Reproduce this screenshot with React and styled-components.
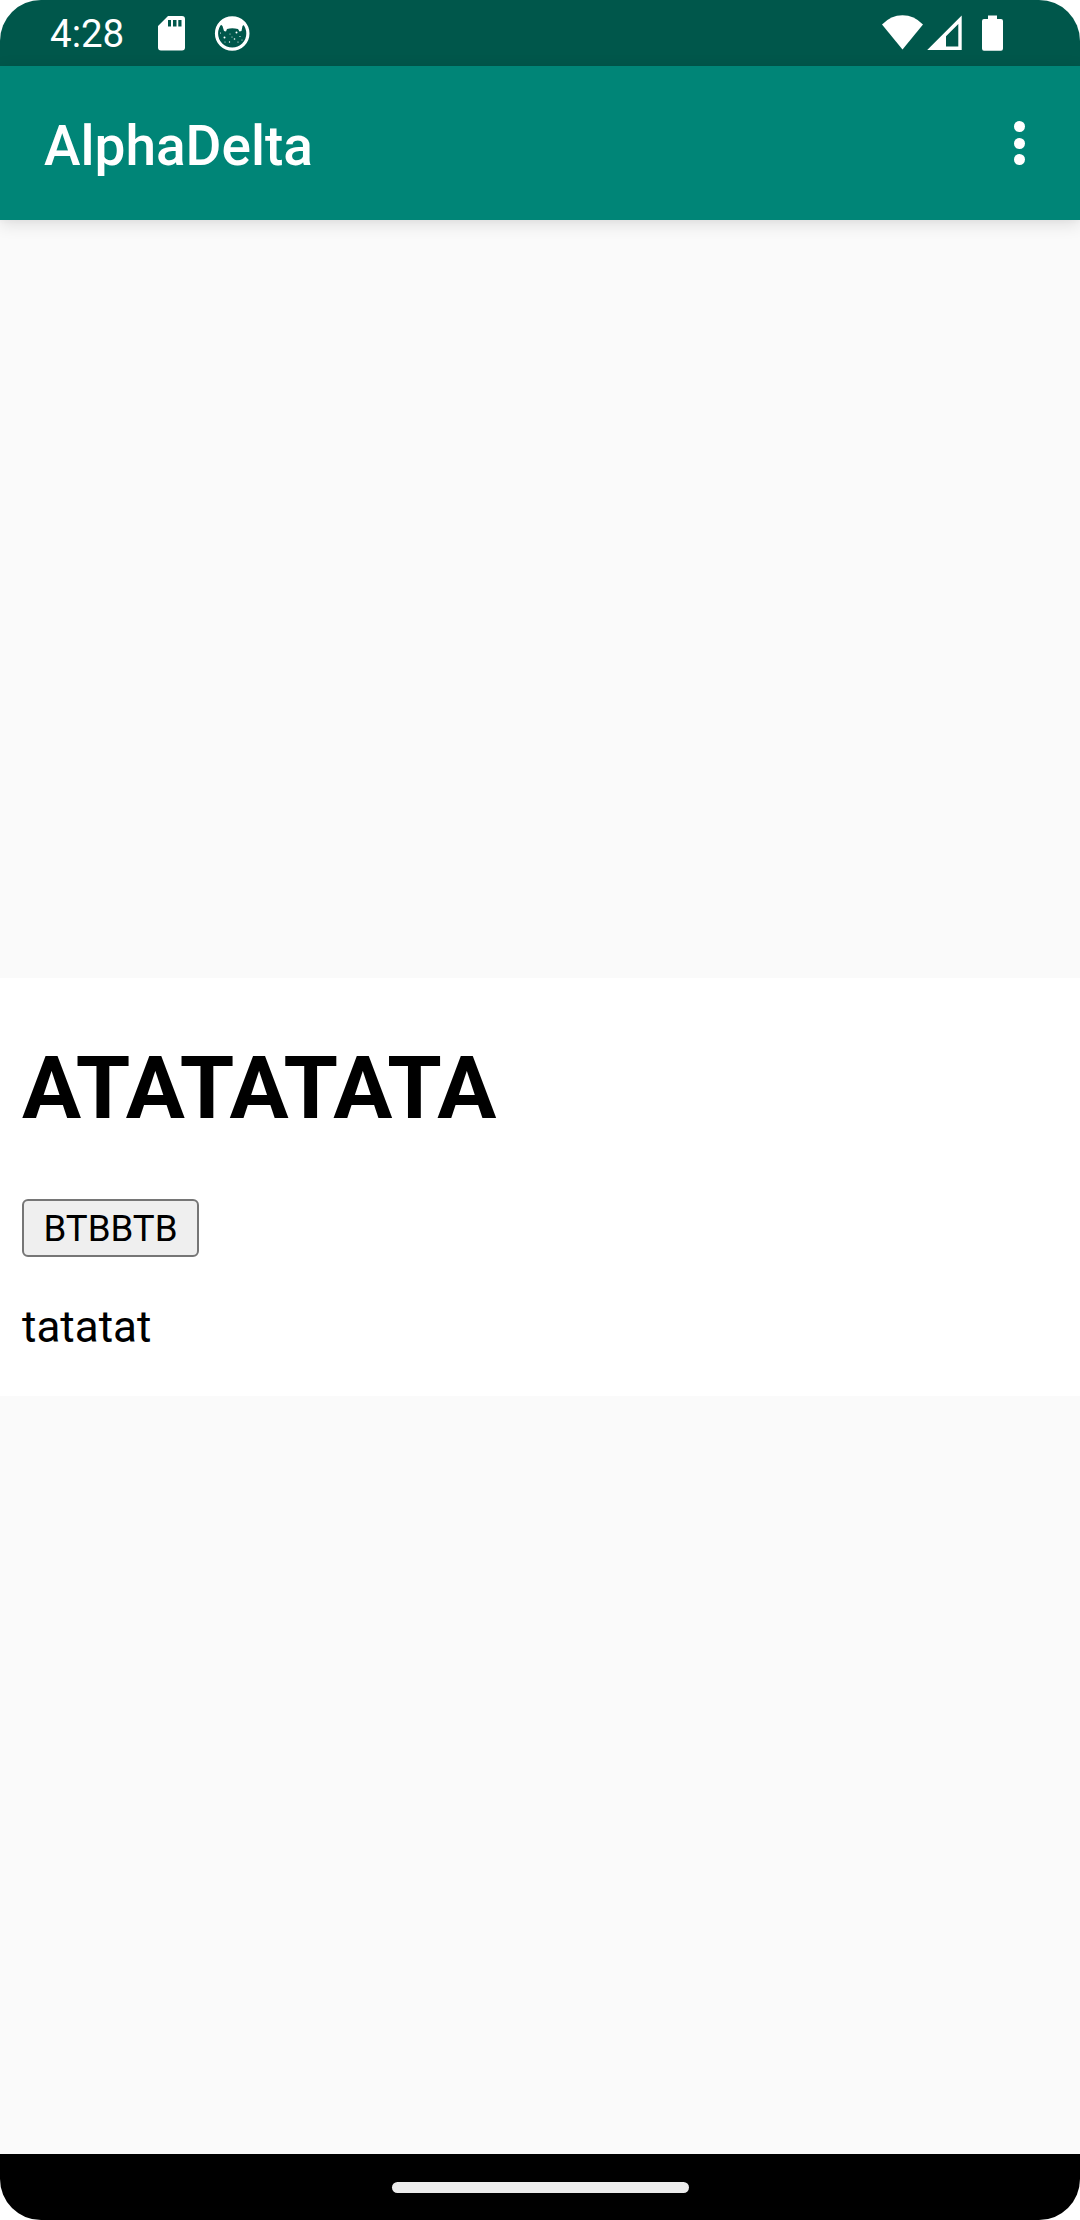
import React from "react";
import styled, { createGlobalStyle } from "styled-components";

const GlobalStyle = createGlobalStyle`
  * { box-sizing: border-box; }
  html, body { margin: 0; padding: 0; background: #fff; }
  body { font-family: Roboto, "Noto Sans", sans-serif; }
`;

const Screen = styled.div`
  display: flex;
  flex-direction: column;
  width: 1080px;
  height: 2220px;
  overflow: hidden;
  border-radius: 41px;
  background: #fafafa;
`;

const StatusBar = styled.header`
  display: flex;
  flex: none;
  align-items: center;
  justify-content: space-between;
  height: 66px;
  padding: 0 77px 0 50px;
  background: #00574b;
  color: #fff;
`;

const StatusGroup = styled.div`
  display: flex;
  align-items: center;
`;

const Clock = styled.span`
  width: 108px;
  font-size: 38.5px;
  line-height: 46px;
  padding-top: 2px;
`;

const Glyph = styled.svg`
  display: block;
  flex: none;
  width: ${(p) => p.$w}px;
  height: 36px;
  margin-left: ${(p) => p.$gap || 0}px;
`;

const AppBar = styled.div`
  display: flex;
  flex: none;
  align-items: center;
  justify-content: space-between;
  height: 154px;
  padding: 0 52px 0 44px;
  background: #008577;
  color: #fff;
  position: relative;
  box-shadow: 0 4px 16px rgba(0, 0, 0, 0.12), 0 2px 4px rgba(0, 0, 0, 0.02);
`;

const Title = styled.h1`
  margin: 0;
  padding-top: 6px;
  font-size: 55px;
  font-weight: 500;
  line-height: 64px;
`;

const MenuButton = styled.button`
  display: flex;
  flex-direction: column;
  align-items: center;
  gap: 5.5px;
  margin: 0 3.5px 0 0;
  padding: 0;
  border: 0;
  background: none;
`;

const Dot = styled.span`
  width: 11px;
  height: 11px;
  border-radius: 50%;
  background: #fff;
`;

const Content = styled.main`
  display: flex;
  flex: 1;
  flex-direction: column;
  justify-content: center;
`;

const WebPage = styled.section`
  display: flex;
  flex-direction: column;
  align-items: flex-start;
  height: 418px;
  padding: 59px 22px 44px;
  background: #fff;
  color: #000;
`;

const Heading = styled.h2`
  margin: 0 0 61px;
  font-size: 88px;
  font-weight: 700;
  line-height: 101px;
`;

const PageButton = styled.button`
  height: 58px;
  width: 177px;
  margin: 0 0 43px;
  padding: 2px 0 0;
  border: 2px solid #767676;
  border-radius: 6px;
  background: #efefef;
  color: #000;
  font-family: inherit;
  font-size: 36.67px;
  line-height: 52px;
`;

const Paragraph = styled.p`
  margin: 0;
  font-size: 44px;
  line-height: 54px;
`;

const NavigationBar = styled.footer`
  display: flex;
  flex: none;
  align-items: center;
  justify-content: center;
  height: 66px;
  background: #000;
`;

const HomeHandle = styled.div`
  width: 297px;
  height: 11px;
  border-radius: 6px;
  background: #ececec;
`;

const SdCardIcon = () => (
  <Glyph $w={27} viewBox="158 15 27 36" fill="#fff">
    <path
      fillRule="evenodd"
      d="M168 16H182Q185 16 185 19V47.500Q185 50.500 182 50.500H161Q158 50.500 158 47.500V26ZM168 20V26.500H171V20ZM173 20V26.500H176.500V20ZM178.300 20V26.500H181.500V20Z"
    />
  </Glyph>
);

const CatIcon = () => (
  <Glyph $w={36} $gap={29} viewBox="214 15 36 36" fill="#fff">
    <circle cx="232.200" cy="33.500" r="15.700" fill="none" stroke="#fff" strokeWidth="3.200" />
    <path d="M219 23Q232 12 246 23L242.500 26L241.500 31L239.500 31.500L238 29Q232 27.500 227 29L226 31.500L224 31L222.500 26Z" />
    <circle cx="224.500" cy="37.500" r="1" />
    <circle cx="236.500" cy="32.500" r="1" />
    <circle cx="230" cy="34" r=".5" />
    <circle cx="234.500" cy="39" r=".8" />
    <circle cx="229.500" cy="42" r=".7" />
    <circle cx="240" cy="36.500" r=".6" />
    <circle cx="220.500" cy="33" r=".6" />
    <circle cx="238" cy="42" r=".6" />
    <circle cx="232" cy="37" r=".5" />
    <circle cx="242" cy="40" r=".5" />
    <circle cx="225" cy="42" r=".5" />
  </Glyph>
);

const WifiIcon = () => (
  <Glyph $w={41} viewBox="883 15 41 36" fill="#fff">
    <path d="M903.500 49.500L883 24.500Q892 15.300 903.500 15.300T924 24.500Z" />
  </Glyph>
);

const SignalIcon = () => (
  <Glyph $w={35} $gap={4} viewBox="927 15 35 36" fill="#fff">
    <path fillRule="evenodd" d="M961.700 15.500V50H927.200ZM958.300 24L946 36.300V46.500H958.300Z" />
  </Glyph>
);

const BatteryIcon = () => (
  <Glyph $w={21} $gap={20} viewBox="982 15 21 36" fill="#fff">
    <path d="M988 15.400H997V19H1001Q1003 19 1003 21V48.500Q1003 50.700 1001 50.700H984Q982 50.700 982 48.500V21Q982 19 984 19H988Z" />
  </Glyph>
);

export default function App() {
  return (
    <>
      <GlobalStyle />
      <Screen>
        <StatusBar>
          <StatusGroup>
            <Clock>4:28</Clock>
            <SdCardIcon />
            <CatIcon />
          </StatusGroup>
          <StatusGroup>
            <WifiIcon />
            <SignalIcon />
            <BatteryIcon />
          </StatusGroup>
        </StatusBar>
        <AppBar>
          <Title>AlphaDelta</Title>
          <MenuButton aria-label="More options">
            <Dot />
            <Dot />
            <Dot />
          </MenuButton>
        </AppBar>
        <Content>
          <WebPage>
            <Heading>ATATATATA</Heading>
            <PageButton>BTBBTB</PageButton>
            <Paragraph>tatatat</Paragraph>
          </WebPage>
        </Content>
        <NavigationBar>
          <HomeHandle />
        </NavigationBar>
      </Screen>
    </>
  );
}
